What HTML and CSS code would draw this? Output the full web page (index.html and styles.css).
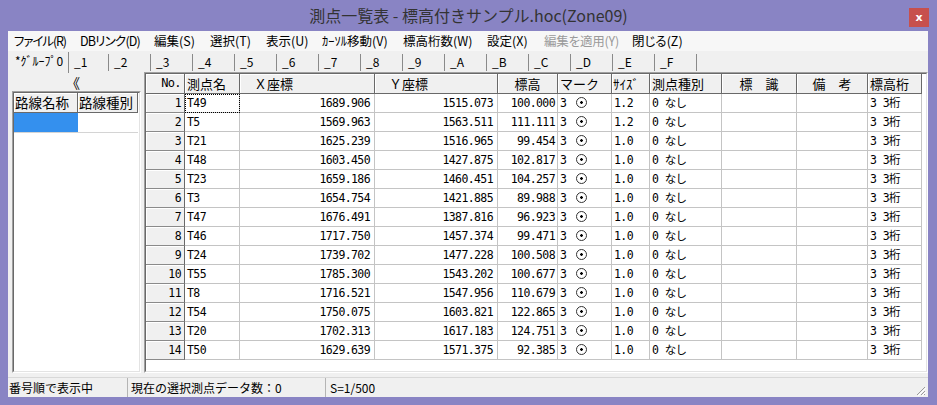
FILE: index.html
```html
<!DOCTYPE html>
<html lang="ja">
<head>
<meta charset="utf-8">
<title>測点一覧表</title>
<link rel="stylesheet" href="styles.css">
</head>
<body>
<div class="window">
  <div class="titlebar">
    <div class="title-spacer"></div>
    <div class="title">測点一覧表 - 標高付きサンプル.hoc(Zone09)</div>
    <div class="close">x</div>
  </div>
  <div class="client">
    <div class="menubar">
      <span class="menu m-file">ファイル(R)</span>
      <span class="menu m-db">DBリンク(D)</span>
      <span class="menu m-short">編集(S)</span>
      <span class="menu m-short">選択(T)</span>
      <span class="menu m-short">表示(U)</span>
      <span class="menu m-cursor">ｶｰｿﾙ移動(V)</span>
      <span class="menu m-digits">標高桁数(W)</span>
      <span class="menu m-set">設定(X)</span>
      <span class="menu m-apply menu-disabled">編集を適用(Y)</span>
      <span class="menu">閉じる(Z)</span>
    </div>
    <div class="tabs">
      <div class="tab tab-active">*ｸﾞﾙｰﾌﾟ0</div>
      <div class="tab tab-narrow">_1</div>
      <div class="tab">_2</div>
      <div class="tab">_3</div>
      <div class="tab">_4</div>
      <div class="tab">_5</div>
      <div class="tab">_6</div>
      <div class="tab">_7</div>
      <div class="tab">_8</div>
      <div class="tab">_9</div>
      <div class="tab">_A</div>
      <div class="tab">_B</div>
      <div class="tab">_C</div>
      <div class="tab">_D</div>
      <div class="tab">_E</div>
      <div class="tab">_F</div>
    </div>
    <div class="main">
      <div class="side">
        <div class="collapse">《</div>
        <div class="listbox">
          <div class="sunken-inner">
            <div class="routes">
              <div class="rh">路線名称</div><div class="rh">路線種別</div>
              <div class="rc rc-sel"></div><div class="rc"></div>
            </div>
          </div>
        </div>
      </div>
      <div class="gridpanel">
        <div class="sunken-inner">
          <div class="grid">
            <div class="h h-r">No.</div><div class="h h-l">測点名</div><div class="h h-x">Ｘ座標</div><div class="h h-x">Ｙ座標</div><div class="h h-c">標高</div><div class="h h-l">マーク</div><div class="h h-s">ｻｲｽﾞ</div><div class="h h-l">測点種別</div><div class="h h-c">標　識</div><div class="h h-c">備　考</div><div class="h h-l">標高桁</div>

            <div class="rn">1</div><div class="d l focus">T49</div><div class="d r">1689.906</div><div class="d r">1515.073</div><div class="d r2">100.000</div><div class="d l">3<i class="mark"></i></div><div class="d l">1.2</div><div class="d l">0 なし</div><div class="d"></div><div class="d"></div><div class="d l">3 3桁</div>
            <div class="rn">2</div><div class="d l">T5</div><div class="d r">1569.963</div><div class="d r">1563.511</div><div class="d r2">111.111</div><div class="d l">3<i class="mark"></i></div><div class="d l">1.2</div><div class="d l">0 なし</div><div class="d"></div><div class="d"></div><div class="d l">3 3桁</div>
            <div class="rn">3</div><div class="d l">T21</div><div class="d r">1625.239</div><div class="d r">1516.965</div><div class="d r2">99.454</div><div class="d l">3<i class="mark"></i></div><div class="d l">1.0</div><div class="d l">0 なし</div><div class="d"></div><div class="d"></div><div class="d l">3 3桁</div>
            <div class="rn">4</div><div class="d l">T48</div><div class="d r">1603.450</div><div class="d r">1427.875</div><div class="d r2">102.817</div><div class="d l">3<i class="mark"></i></div><div class="d l">1.0</div><div class="d l">0 なし</div><div class="d"></div><div class="d"></div><div class="d l">3 3桁</div>
            <div class="rn">5</div><div class="d l">T23</div><div class="d r">1659.186</div><div class="d r">1460.451</div><div class="d r2">104.257</div><div class="d l">3<i class="mark"></i></div><div class="d l">1.0</div><div class="d l">0 なし</div><div class="d"></div><div class="d"></div><div class="d l">3 3桁</div>
            <div class="rn">6</div><div class="d l">T3</div><div class="d r">1654.754</div><div class="d r">1421.885</div><div class="d r2">89.988</div><div class="d l">3<i class="mark"></i></div><div class="d l">1.0</div><div class="d l">0 なし</div><div class="d"></div><div class="d"></div><div class="d l">3 3桁</div>
            <div class="rn">7</div><div class="d l">T47</div><div class="d r">1676.491</div><div class="d r">1387.816</div><div class="d r2">96.923</div><div class="d l">3<i class="mark"></i></div><div class="d l">1.0</div><div class="d l">0 なし</div><div class="d"></div><div class="d"></div><div class="d l">3 3桁</div>
            <div class="rn">8</div><div class="d l">T46</div><div class="d r">1717.750</div><div class="d r">1457.374</div><div class="d r2">99.471</div><div class="d l">3<i class="mark"></i></div><div class="d l">1.0</div><div class="d l">0 なし</div><div class="d"></div><div class="d"></div><div class="d l">3 3桁</div>
            <div class="rn">9</div><div class="d l">T24</div><div class="d r">1739.702</div><div class="d r">1477.228</div><div class="d r2">100.508</div><div class="d l">3<i class="mark"></i></div><div class="d l">1.0</div><div class="d l">0 なし</div><div class="d"></div><div class="d"></div><div class="d l">3 3桁</div>
            <div class="rn">10</div><div class="d l">T55</div><div class="d r">1785.300</div><div class="d r">1543.202</div><div class="d r2">100.677</div><div class="d l">3<i class="mark"></i></div><div class="d l">1.0</div><div class="d l">0 なし</div><div class="d"></div><div class="d"></div><div class="d l">3 3桁</div>
            <div class="rn">11</div><div class="d l">T8</div><div class="d r">1716.521</div><div class="d r">1547.956</div><div class="d r2">110.679</div><div class="d l">3<i class="mark"></i></div><div class="d l">1.0</div><div class="d l">0 なし</div><div class="d"></div><div class="d"></div><div class="d l">3 3桁</div>
            <div class="rn">12</div><div class="d l">T54</div><div class="d r">1750.075</div><div class="d r">1603.821</div><div class="d r2">122.865</div><div class="d l">3<i class="mark"></i></div><div class="d l">1.0</div><div class="d l">0 なし</div><div class="d"></div><div class="d"></div><div class="d l">3 3桁</div>
            <div class="rn">13</div><div class="d l">T20</div><div class="d r">1702.313</div><div class="d r">1617.183</div><div class="d r2">124.751</div><div class="d l">3<i class="mark"></i></div><div class="d l">1.0</div><div class="d l">0 なし</div><div class="d"></div><div class="d"></div><div class="d l">3 3桁</div>
            <div class="rn">14</div><div class="d l">T50</div><div class="d r">1629.639</div><div class="d r">1571.375</div><div class="d r2">92.385</div><div class="d l">3<i class="mark"></i></div><div class="d l">1.0</div><div class="d l">0 なし</div><div class="d"></div><div class="d"></div><div class="d l">3 3桁</div>
          </div>
        </div>
      </div>
    </div>
    <div class="statusbar">
      <div class="panel panel-1">番号順で表示中</div>
      <div class="panel panel-2">現在の選択測点データ数：0</div>
      <div class="panel panel-3">S=1/500</div>
      <div class="grip">
        <svg width="12" height="12" viewBox="0 0 12 12">
          <path d="M11 3 L3 11 M11 7 L7 11 M11 10 L10 11" stroke="#9a9a9a" stroke-width="1" fill="none"/>
          <path d="M12 4 L4 12 M12 8 L8 12" stroke="#ffffff" stroke-width="1" fill="none"/>
        </svg>
      </div>
    </div>
  </div>
</div>
</body>
</html>
```

FILE: styles.css
```css
* { box-sizing: border-box; }
html, body { margin: 0; padding: 0; }
body {
  width: 937px;
  height: 405px;
  overflow: hidden;
  background: #8984c4;
  font-family: "Noto Sans CJK JP", sans-serif;
  font-size: 12px;
  color: #000;
}
.window {
  width: 937px;
  height: 405px;
  display: flex;
  flex-direction: column;
}
.titlebar {
  height: 31px;
  display: grid;
  grid-template-columns: 1fr auto 1fr;
  align-items: center;
}
.title {
  font-size: 16px;
  line-height: 31px;
  color: #333;
  white-space: nowrap;
}
.close {
  justify-self: end;
  align-self: start;
  margin: 8px 8px 0 0;
  width: 20px;
  height: 19px;
  background: #c7504d;
  color: #fff;
  font: bold 11px "DejaVu Sans", sans-serif;
  display: flex;
  align-items: center;
  justify-content: center;
}
.client {
  margin: 0 9px 0 8px;
  height: 366px;
  background: #f0f0f0;
  display: flex;
  flex-direction: column;
}
.menubar {
  height: 20px;
  background: #f7f7f7;
  display: flex;
  align-items: center;
  padding-left: 6px;
  font-size: 12.5px;
  font-feature-settings: "palt";
  white-space: nowrap;
}
.menu { line-height: 20px; flex: none; }
.m-file { width: 66px; letter-spacing: -1.1px; }
.m-db { width: 74px; letter-spacing: -0.8px; }
.m-short { width: 56px; }
.m-cursor { width: 81px; }
.m-digits { width: 84px; }
.m-set { width: 57px; }
.m-apply { width: 88px; letter-spacing: -0.2px; }
.menu-disabled { color: #9a9a9a; }

.tabs {
  height: 21px;
  display: flex;
  align-items: flex-start;
  padding-left: 2px;
}
.tab {
  width: 42px;
  height: 17px;
  margin-top: 3px;
  padding-left: 5px;
  border-right: 1px solid #8a8a8a;
  font-size: 12px;
  line-height: 16px;
  white-space: nowrap;
}
.tab-active {
  width: 59px;
  height: 21px;
  margin-top: 1px;
  line-height: 18px;
}
.tab-narrow { width: 40px; }

.main { height: 305px; display: flex; }
.side { width: 136px; display: flex; flex-direction: column; }
.collapse {
  height: 19px;
  text-align: center;
  font-size: 14px;
  line-height: 19px;
  padding-top: 1px;
  padding-right: 6px;
}
.listbox {
  margin-left: 4px;
  width: 129px;
  height: 282px;
  border: 1px solid;
  border-color: #a0a0a0 #fff #fff #a0a0a0;
}
.sunken-inner {
  height: 100%;
  background: #fff;
  border: 1px solid;
  border-color: #696969 #e3e3e3 #e3e3e3 #696969;
}
.routes {
  display: grid;
  grid-template-columns: 64px 60px;
  grid-template-rows: 20px 20px;
}
.rh {
  background: #f0f0f0;
  border-right: 1px solid #696969;
  border-bottom: 1px solid #696969;
  box-shadow: inset 1px 1px 0 #fff;
  font-size: 13.5px;
  line-height: 18px;
  padding-left: 1px;
  white-space: nowrap;
  overflow: hidden;
}
.rc { border-bottom: 1px solid #d4d4d4; }
.rc-sel { background: #3490ee; }

.gridpanel {
  width: 784px;
  height: 301px;
  border: 1px solid;
  border-color: #a0a0a0 #fff #fff #a0a0a0;
}
.grid {
  display: grid;
  grid-template-columns: 39px 55px 135px 123px 60px 54px 38px 72px 75px 71px 54px;
  grid-template-rows: 20px;
  grid-auto-rows: 19px;
  width: 776px;
}
.h {
  background: #f0f0f0;
  border-right: 1px solid #696969;
  border-bottom: 1px solid #696969;
  box-shadow: inset 1px 1px 0 #fff;
  font-size: 13px;
  line-height: 19px;
  white-space: nowrap;
  overflow: hidden;
}
.h-r { text-align: right; padding-right: 3px; font-family: "DejaVu Sans Mono", monospace; font-size: 12px; letter-spacing: -0.6px; }
.h-l { padding-left: 2px; }
.h-s { padding-left: 1px; }
.h-x { padding-left: 14px; }
.h-c { text-align: center; }
.rn {
  background: #f0f0f0;
  border-right: 1px solid #696969;
  border-bottom: 1px solid #8a8a8a;
  box-shadow: inset 1px 1px 0 #fff;
  text-align: right;
  padding-right: 3px;
  font-family: "DejaVu Sans Mono", monospace;
  font-size: 11.5px;
  letter-spacing: -0.6px;
  line-height: 18px;
}
.d {
  border-right: 1px solid #c4c4c4;
  border-bottom: 1px solid #c4c4c4;
  font-family: "DejaVu Sans Mono", "Noto Sans CJK JP", monospace;
  font-size: 11.5px;
  letter-spacing: -0.6px;
  line-height: 18px;
  white-space: pre;
  overflow: hidden;
}
.l { padding-left: 2px; }
.r { text-align: right; padding-right: 4px; }
.r2 { text-align: right; padding-right: 2px; }
.focus { outline: 1px dotted #000; outline-offset: -1px; }
.mark {
  display: inline-block;
  width: 11px;
  height: 11px;
  margin-left: 10px;
  vertical-align: -1px;
  border: 1px solid #333;
  border-radius: 50%;
  background: radial-gradient(circle, #000 1px, transparent 1.6px);
}

.statusbar {
  height: 20px;
  display: flex;
  border-top: 1px solid #d8d8d8;
  font-size: 12px;
  line-height: 19px;
}
.panel {
  border-right: 1px solid #b4b4b4;
  padding-left: 1px;
  white-space: nowrap;
}
.panel-1 { width: 120px; }
.panel-2 { width: 198px; padding-left: 3px; }
.panel-3 { flex: 1; padding-left: 4px; border-right: none; }
.grip { width: 14px; display: flex; align-items: flex-end; }
.grip svg { display: block; margin-bottom: 1px; }
```
